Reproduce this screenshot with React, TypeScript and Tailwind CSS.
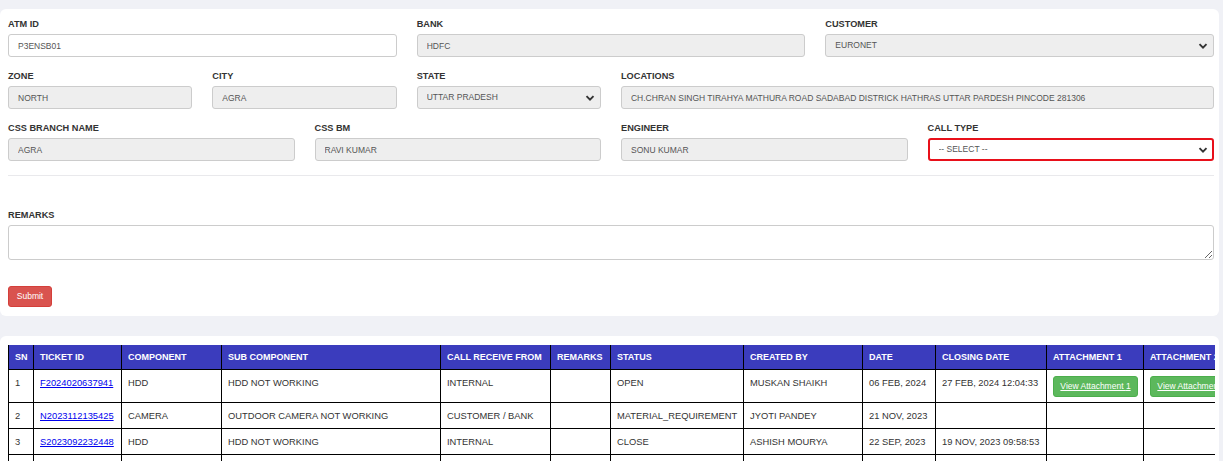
import React from 'react'

function Label({ children }: { children: React.ReactNode }) {
  return (
    <label className="block text-[9.2px] font-bold leading-[12px] mb-[4px] text-[#333] uppercase">
      {children}
    </label>
  )
}

function Field({ label, value, white = false }: { label: string; value: string; white?: boolean }) {
  return (
    <div>
      <Label>{label}</Label>
      <input
        readOnly
        value={value}
        className={`block w-full h-[23px] border border-[#ccc] rounded-[3px] pl-[9px] text-[8.5px] text-[#555] outline-none ${
          white ? 'bg-white' : 'bg-[#eee]'
        }`}
      />
    </div>
  )
}

function Chevron() {
  return (
    <svg
      viewBox="0 0 10 10"
      className="absolute right-[6px] top-1/2 -translate-y-1/2 w-[10px] h-[10px] pointer-events-none"
    >
      <polyline points="1.5,3.2 5,6.7 8.5,3.2" fill="none" stroke="#333" strokeWidth="1.9" />
    </svg>
  )
}

function SelectField({ label, value, alert = false }: { label: string; value: string; alert?: boolean }) {
  return (
    <div>
      <Label>{label}</Label>
      <div className="relative">
        <select
          defaultValue={value}
          className={`block w-full h-[23px] appearance-none rounded-[3px] pl-[9px] text-[8.5px] text-[#555] outline-none ${
            alert ? 'border-2 border-[#e8101a] bg-white' : 'border border-[#ccc] bg-[#eee]'
          }`}
        >
          <option value={value}>{value}</option>
        </select>
        <Chevron />
      </div>
    </div>
  )
}

type Row = {
  sn: string
  ticket: string
  component: string
  sub: string
  from: string
  remarks: string
  status: string
  by: string
  date: string
  closing: string
  att1: boolean
  att2: boolean
}

const rows: Row[] = [
  {
    sn: '1',
    ticket: 'F2024020637941',
    component: 'HDD',
    sub: 'HDD NOT WORKING',
    from: 'INTERNAL',
    remarks: '',
    status: 'OPEN',
    by: 'MUSKAN SHAIKH',
    date: '06 FEB, 2024',
    closing: '27 FEB, 2024 12:04:33',
    att1: true,
    att2: true,
  },
  {
    sn: '2',
    ticket: 'N2023112135425',
    component: 'CAMERA',
    sub: 'OUTDOOR CAMERA NOT WORKING',
    from: 'CUSTOMER / BANK',
    remarks: '',
    status: 'MATERIAL_REQUIREMENT',
    by: 'JYOTI PANDEY',
    date: '21 NOV, 2023',
    closing: '',
    att1: false,
    att2: false,
  },
  {
    sn: '3',
    ticket: 'S2023092232448',
    component: 'HDD',
    sub: 'HDD NOT WORKING',
    from: 'INTERNAL',
    remarks: '',
    status: 'CLOSE',
    by: 'ASHISH MOURYA',
    date: '22 SEP, 2023',
    closing: '19 NOV, 2023 09:58:53',
    att1: false,
    att2: false,
  },
  {
    sn: '4',
    ticket: '',
    component: '',
    sub: '',
    from: '',
    remarks: '',
    status: '',
    by: '',
    date: '',
    closing: '',
    att1: true,
    att2: true,
  },
]

const headers = [
  'SN',
  'TICKET ID',
  'COMPONENT',
  'SUB COMPONENT',
  'CALL RECEIVE FROM',
  'REMARKS',
  'STATUS',
  'CREATED BY',
  'DATE',
  'CLOSING DATE',
  'ATTACHMENT 1',
  'ATTACHMENT 2',
]

function AttachButton({ n }: { n: number }) {
  return (
    <a
      href="#"
      className="inline-flex align-top items-center justify-center w-[85px] h-[21px] rounded-[3px] bg-[#5cb85c] border border-[#4cae4c] text-white text-[8.5px] underline whitespace-nowrap overflow-hidden"
    >
      View Attachment {n}
    </a>
  )
}

const td = 'border border-black px-[6px] pt-[6px] pb-[5px] align-top leading-[14px] whitespace-nowrap overflow-hidden'

export default function App() {
  return (
    <div className="min-h-screen bg-[#f0f1f6] pt-[9px] pr-[4px] font-['Liberation_Sans',Arial,sans-serif]">
      <div className="bg-white rounded-[6px] pl-[8px] pr-[5px] pt-[9px] pb-[9px]">
        <div className="flex flex-col gap-[13px]">
          <div className="grid grid-cols-3 gap-x-[20px]">
            <Field label="ATM ID" value="P3ENSB01" white />
            <Field label="BANK" value="HDFC" />
            <SelectField label="CUSTOMER" value="EURONET" />
          </div>
          <div className="grid grid-cols-6 gap-x-[20px]">
            <Field label="ZONE" value="NORTH" />
            <Field label="CITY" value="AGRA" />
            <SelectField label="STATE" value="UTTAR PRADESH" />
            <div className="col-span-3">
              <Field
                label="LOCATIONS"
                value="CH.CHRAN SINGH TIRAHYA MATHURA ROAD SADABAD DISTRICK HATHRAS UTTAR PARDESH PINCODE 281306"
              />
            </div>
          </div>
          <div className="grid grid-cols-4 gap-x-[20px]">
            <Field label="CSS BRANCH NAME" value="AGRA" />
            <Field label="CSS BM" value="RAVI KUMAR" />
            <Field label="ENGINEER" value="SONU KUMAR" />
            <SelectField label="CALL TYPE" value="-- SELECT --" alert />
          </div>
        </div>

        <div className="mt-[14px] border-t border-[#e9e9ec]" />

        <div className="mt-[33px]">
          <Label>Remarks</Label>
          <textarea className="block w-full h-[35px] border border-[#ccc] rounded-[3px] outline-none" />
        </div>

        <button className="mt-[26px] w-[44px] h-[21px] rounded-[3px] bg-[#d9534f] border border-[#d43f3a] text-white text-[8.5px]">
          Submit
        </button>
      </div>

      <div className="mt-[20px] bg-white rounded-t-[6px] pl-[8px] pr-[4px] pt-[9px] overflow-hidden">
        <div className="overflow-hidden">
          <table className="table-fixed border-collapse w-[1232px] text-left">
            <colgroup>
              <col className="w-[25px]" />
              <col className="w-[88px]" />
              <col className="w-[100px]" />
              <col className="w-[219px]" />
              <col className="w-[110px]" />
              <col className="w-[60px]" />
              <col className="w-[133px]" />
              <col className="w-[119px]" />
              <col className="w-[73px]" />
              <col className="w-[111px]" />
              <col className="w-[97px]" />
              <col className="w-[97px]" />
            </colgroup>
            <thead>
              <tr className="bg-[#3b3cbd]">
                {headers.map((h) => (
                  <th
                    key={h}
                    className="border-x border-black px-[6px] h-[24px] text-[9px] font-bold text-white leading-[12px] whitespace-nowrap overflow-hidden"
                  >
                    {h}
                  </th>
                ))}
              </tr>
            </thead>
            <tbody className="text-[9.35px] text-[#333]">
              {rows.map((r) => (
                <tr key={r.sn}>
                  <td className={td}>{r.sn}</td>
                  <td className={td}>
                    <a href="#" className="text-[#0000ee] underline">
                      {r.ticket}
                    </a>
                  </td>
                  <td className={td}>{r.component}</td>
                  <td className={td}>{r.sub}</td>
                  <td className={td}>{r.from}</td>
                  <td className={td}>{r.remarks}</td>
                  <td className={td}>{r.status}</td>
                  <td className={td}>{r.by}</td>
                  <td className={td}>{r.date}</td>
                  <td className={td}>{r.closing}</td>
                  <td className={td}>{r.att1 && <AttachButton n={1} />}</td>
                  <td className={td}>{r.att2 && <AttachButton n={2} />}</td>
                </tr>
              ))}
            </tbody>
          </table>
        </div>
      </div>
    </div>
  )
}
